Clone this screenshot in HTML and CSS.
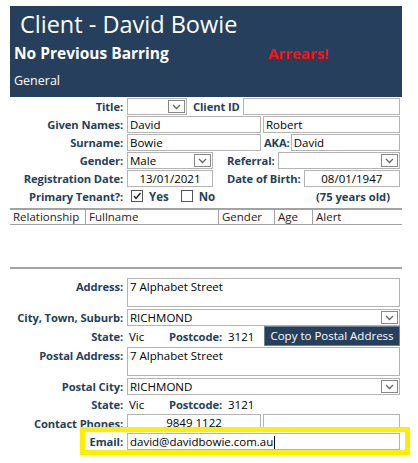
FILE: index.html
```html
<!DOCTYPE html>
<html>
<head>
<meta charset="utf-8">
<link rel="stylesheet" href="styles.css">
</head>
<body>
<div class="page">
  <div class="header">
    <div class="h-title">Client - David Bowie</div>
    <div class="h-row">
      <span class="h-barring">No Previous Barring</span>
      <span class="h-arrears">Arrears!</span>
    </div>
    <div class="h-tab">General</div>
  </div>

  <div class="section">
    <div class="row">
      <div class="lbl">Title:</div>
      <div class="combo w-title"><span class="val"></span><span class="btn"><svg width="9" height="6" viewBox="0 0 9 6"><path d="M1 1 L4.5 4.5 L8 1" fill="none" stroke="#666" stroke-width="1.3"/></svg></span></div>
      <div class="lbl2 l-cid">Client ID</div>
      <div class="box fill"></div>
    </div>
    <div class="row">
      <div class="lbl">Given Names:</div>
      <div class="box w-half">David</div>
      <div class="box fill gap2">Robert</div>
    </div>
    <div class="row">
      <div class="lbl">Surname:</div>
      <div class="box w-half">Bowie</div>
      <div class="lbl2 l-aka">AKA:</div>
      <div class="box fill">David</div>
    </div>
    <div class="row">
      <div class="lbl">Gender:</div>
      <div class="combo w-gender"><span class="val">Male</span><span class="btn"><svg width="9" height="6" viewBox="0 0 9 6"><path d="M1 1 L4.5 4.5 L8 1" fill="none" stroke="#666" stroke-width="1.3"/></svg></span></div>
      <div class="lbl2 l-ref">Referral:</div>
      <div class="combo fill"><span class="val"></span><span class="btn"><svg width="9" height="6" viewBox="0 0 9 6"><path d="M1 1 L4.5 4.5 L8 1" fill="none" stroke="#666" stroke-width="1.3"/></svg></span></div>
    </div>
    <div class="row">
      <div class="lbl">Registration Date:</div>
      <div class="box w-gender center">13/01/2021</div>
      <div class="lbl2 l-dob">Date of Birth:</div>
      <div class="box fill center">08/01/1947</div>
    </div>
    <div class="row">
      <div class="lbl">Primary Tenant?:</div>
      <div class="checks">
        <span class="chk on"><svg width="10" height="10" viewBox="0 0 10 10"><path d="M2 5 L4 7.5 L8.5 2" fill="none" stroke="#222" stroke-width="1.4"/></svg></span>
        <span class="chk-l">Yes</span>
        <span class="chk"></span>
        <span class="chk-l">No</span>
      </div>
      <div class="age">(75 years old)</div>
    </div>
  </div>

  <div class="grid">
    <div class="g-head">
      <div class="g-c c1">Relationship</div>
      <div class="g-c c2">Fullname</div>
      <div class="g-c c3">Gender</div>
      <div class="g-c c4">Age</div>
      <div class="g-c c5">Alert</div>
    </div>
    <div class="g-body"></div>
  </div>

  <div class="section addr">
    <div class="row tall">
      <div class="lbl">Address:</div>
      <div class="box multi fill">7 Alphabet Street</div>
    </div>
    <div class="row">
      <div class="lbl">City, Town, Suburb:</div>
      <div class="combo fill"><span class="val">RICHMOND</span><span class="btn"><svg width="9" height="6" viewBox="0 0 9 6"><path d="M1 1 L4.5 4.5 L8 1" fill="none" stroke="#666" stroke-width="1.3"/></svg></span></div>
    </div>
    <div class="row state1">
      <div class="lbl">State:</div>
      <div class="plain w-state">Vic</div>
      <div class="lbl2">Postcode:</div>
      <div class="plain w-pc">3121</div>
      <div class="copy-btn">Copy to Postal Address</div>
    </div>
    <div class="row tall">
      <div class="lbl">Postal Address:</div>
      <div class="box multi fill">7 Alphabet Street</div>
    </div>
    <div class="row">
      <div class="lbl">Postal City:</div>
      <div class="combo fill"><span class="val">RICHMOND</span><span class="btn"><svg width="9" height="6" viewBox="0 0 9 6"><path d="M1 1 L4.5 4.5 L8 1" fill="none" stroke="#666" stroke-width="1.3"/></svg></span></div>
    </div>
    <div class="row">
      <div class="lbl">State:</div>
      <div class="plain w-state">Vic</div>
      <div class="lbl2">Postcode:</div>
      <div class="plain w-pc">3121</div>
    </div>
    <div class="row phones">
      <div class="lbl">Contact Phones:</div>
      <div class="box w-half center">9849 1122</div>
      <div class="box fill gap2"></div>
    </div>
    <div class="email-hl">
      <div class="lbl e-lbl">Email:</div>
      <div class="box w-email">david@davidbowie.com.au<span class="caret"></span></div>
    </div>
  </div>
</div>
</body>
</html>
```
FILE: styles.css
```css
* { box-sizing: border-box; }
body {
  margin: 0;
  background: #fff;
  font-family: "Open Sans", "Noto Sans", sans-serif;
  font-size: 11px;
  color: #000;
}
.page {
  width: 418px;
  padding: 6px 16px 0 10px;
}
.header {
  background: #253f5c;
  color: #fff;
  height: 91px;
  padding: 2px 0 0 10px;
}
.h-title {
  font-size: 23.5px;
  line-height: 32px;
}
.h-row {
  display: flex;
  margin-top: 1px;
  height: 24px;
  line-height: 24px;
  margin-left: -6px;
}
.h-barring {
  font-weight: 700;
  font-size: 15.5px;
  width: 254px;
}
.h-arrears {
  color: #ff1010;
  font-weight: 700;
  font-size: 15px;
}
.h-tab {
  margin-left: -6px;
  margin-top: 6px;
  font-size: 12.5px;
  line-height: 20px;
}

.section {
  display: flex;
  flex-direction: column;
  margin-right: 2px;
}
.row {
  display: flex;
  align-items: center;
  height: 18px;
}
.lbl {
  width: 113px;
  flex: none;
  text-align: right;
  font-weight: 700;
  color: #253f5c;
  padding-right: 0;
  margin-right: 4px;
  white-space: nowrap;
  font-size: 11.2px;
  letter-spacing: -0.1px;
}
.lbl2 {
  font-weight: 700;
  color: #253f5c;
  white-space: nowrap;
  font-size: 11.2px;
  letter-spacing: -0.1px;
}
.box, .combo {
  height: 17px;
  border: 1px solid #b4b4b4;
  background: #fff;
  line-height: 15px;
  padding-left: 2px;
  white-space: nowrap;
  overflow: hidden;
  font-size: 11.5px;
}
.fill { flex: 1; min-width: 0; }
.gap2 { margin-left: 2px; }
.center { text-align: center; padding-left: 0; }
.combo { display: flex; padding-right: 1px; }
.combo .val { flex: 1; }
.combo .btn {
  width: 17px;
  height: 13px;
  margin-top: 1px;
  border: 1px solid #888;
  display: flex;
  align-items: center;
  justify-content: center;
  padding-top: 2px;
}
.w-title { width: 60px; }
.l-cid { margin-left: 6px; margin-right: 3px; }
.w-half { width: 134px; }
.l-aka { margin-left: 3px; margin-right: 1px; }
.w-gender { width: 86px; }
.l-ref { margin-left: 14px; margin-right: 3px; }
.l-dob { margin-left: 14px; margin-right: 3px; }
.checks { display: flex; align-items: center; width: 180px; padding-left: 4px; }
.chk {
  width: 12px; height: 12px;
  border: 1px solid #555;
  display: inline-flex; align-items: center; justify-content: center;
}
.chk-l { font-weight: 700; color: #253f5c; margin: 0 12px 0 6px; font-size: 11.5px; }
.age { font-weight: 700; color: #253f5c; margin-left: 9px; font-size: 11.2px; }

.grid {
  margin-top: 3px;
  border-top: 2px solid #a3a3a3;
}
.g-head {
  display: flex;
  height: 15px;
  border-bottom: 1px solid #a3a3a3;
  line-height: 14px;
  color: #222;
  font-size: 11.5px;
}
.g-c { padding-left: 3px; border-right: 1px solid #a3a3a3; white-space: nowrap; }
.c1 { width: 76px; }
.c2 { width: 133px; }
.c3 { width: 56px; }
.c4 { width: 38px; }
.c5 { border-right: none; }
.g-body {
  height: 44px;
  border-bottom: 2px solid #a3a3a3;
}

.addr { margin-top: 9px; }
.row.tall { height: 30px; align-items: flex-start; }
.row.tall .lbl { padding-top: 1px; }
.multi { height: 29px; }
.plain { font-size: 11.5px; padding-left: 2px; }
.w-state { width: 42px; }
.w-pc { width: 40px; padding-left: 6px; }
.row.state1 { height: 21px; align-items: flex-start; }
.row.state1 .lbl, .row.state1 .lbl2, .row.state1 .plain { padding-top: 3px; }
.copy-btn {
  flex: 1;
  background: #253f5c;
  color: #fff;
  border: 1px solid #6b7f96;
  height: 20px;
  line-height: 18px;
  text-align: center;
  margin-left: 2px;
  font-size: 11.5px;
  white-space: nowrap;
}
.row.phones { height: 18px; align-items: flex-end; }
.email-hl {
  display: flex;
  align-items: center;
  margin-left: 70px;
  width: 330px;
  height: 28px;
  border: 5px solid #ffee00;
  margin-top: -4px;
}
.e-lbl { width: 38px; }
.w-email { width: 273px; }
.caret {
  display: inline-block;
  width: 1px;
  height: 13px;
  background: #000;
  vertical-align: middle;
  margin-left: 1px;
}
```
